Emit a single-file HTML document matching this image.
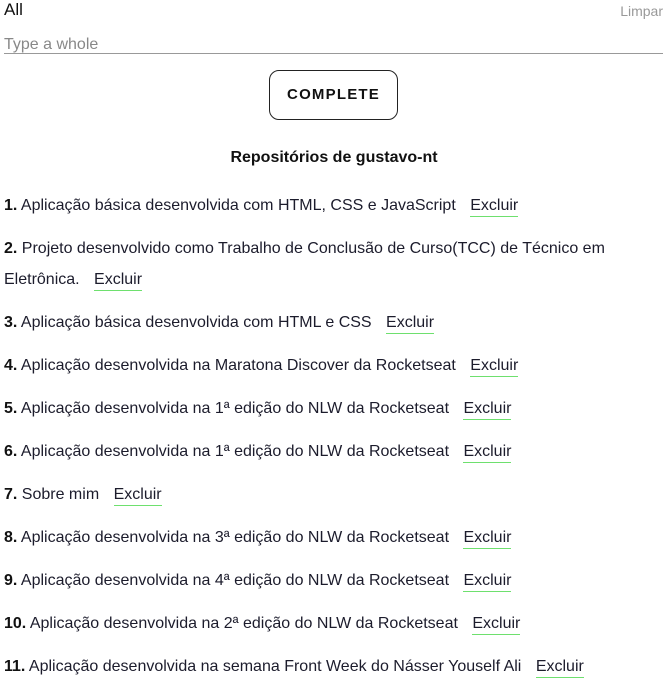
<!DOCTYPE html>
<html><head><meta charset="utf-8"><style>
body{margin:0;width:668px;height:683px;overflow:hidden;background:#fff;font-family:"Liberation Sans",Arial,sans-serif;color:#1c1c2c;}
.top{position:absolute;left:4px;top:0;font-size:17px;line-height:20px;color:#111;}
.limpar{position:absolute;right:5px;top:3px;font-size:14px;color:#999;}
.inp{position:absolute;left:4px;top:35px;width:659px;height:18px;border-bottom:1px solid #999;font-size:16px;color:#888;line-height:19px;}
.btn{position:absolute;left:269px;top:70px;width:127px;height:48px;border:1px solid #222;border-radius:10px;font-weight:bold;font-size:15px;letter-spacing:1.2px;text-align:center;line-height:48px;color:#111;}
h3{position:absolute;left:0;width:668px;top:149px;margin:0;text-align:center;font-size:16px;line-height:18px;color:#111;}
ul{position:absolute;left:4px;top:190px;margin:0;padding:0;list-style:none;width:620px;font-size:16px;}
li{line-height:31px;margin-bottom:12px;}
b{color:#111;}
.x{margin-left:10px;border-bottom:1px solid #6ee06e;padding-bottom:2px;}
</style></head><body>
<div class="top">All</div>
<div class="limpar">Limpar</div>
<div class="inp">Type a whole</div>
<div class="btn">COMPLETE</div>
<h3>Repositórios de gustavo-nt</h3>
<ul>
<li><b>1.</b> Aplicação básica desenvolvida com HTML, CSS e JavaScript <span class="x">Excluir</span></li>
<li><b>2.</b> Projeto desenvolvido como Trabalho de Conclusão de Curso(TCC) de Técnico em Eletrônica. <span class="x">Excluir</span></li>
<li><b>3.</b> Aplicação básica desenvolvida com HTML e CSS <span class="x">Excluir</span></li>
<li><b>4.</b> Aplicação desenvolvida na Maratona Discover da Rocketseat <span class="x">Excluir</span></li>
<li><b>5.</b> Aplicação desenvolvida na 1ª edição do NLW da Rocketseat <span class="x">Excluir</span></li>
<li><b>6.</b> Aplicação desenvolvida na 1ª edição do NLW da Rocketseat <span class="x">Excluir</span></li>
<li><b>7.</b> Sobre mim <span class="x">Excluir</span></li>
<li><b>8.</b> Aplicação desenvolvida na 3ª edição do NLW da Rocketseat <span class="x">Excluir</span></li>
<li><b>9.</b> Aplicação desenvolvida na 4ª edição do NLW da Rocketseat <span class="x">Excluir</span></li>
<li><b>10.</b> Aplicação desenvolvida na 2ª edição do NLW da Rocketseat <span class="x">Excluir</span></li>
<li><b>11.</b> Aplicação desenvolvida na semana Front Week do Násser Youself Ali <span class="x">Excluir</span></li>
</ul>
</body></html>
